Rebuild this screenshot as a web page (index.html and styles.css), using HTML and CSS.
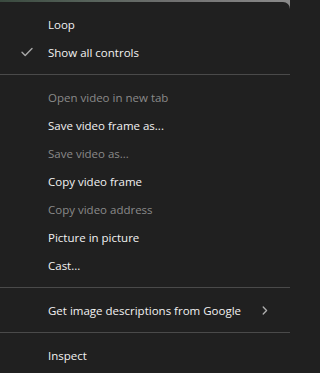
FILE: index.html
```html
<!DOCTYPE html>
<html>
<head>
<meta charset="utf-8">
<link rel="stylesheet" href="styles.css">
</head>
<body>
<div class="menu">
  <div class="item"><span class="label">Loop</span></div>
  <div class="item"><span class="check"><svg width="12" height="10" viewBox="0 0 12 10"><path d="M1 5.2 L4.2 8.4 L11 1.4" fill="none" stroke="#a8a8a8" stroke-width="1.4" stroke-linecap="round" stroke-linejoin="round"/></svg></span><span class="label">Show all controls</span></div>
  <div class="sep"></div>
  <div class="item disabled"><span class="label">Open video in new tab</span></div>
  <div class="item"><span class="label">Save video frame as...</span></div>
  <div class="item disabled"><span class="label">Save video as...</span></div>
  <div class="item"><span class="label">Copy video frame</span></div>
  <div class="item disabled"><span class="label">Copy video address</span></div>
  <div class="item"><span class="label">Picture in picture</span></div>
  <div class="item"><span class="label">Cast...</span></div>
  <div class="sep"></div>
  <div class="item"><span class="label">Get image descriptions from Google</span><span class="arrow"><svg width="6" height="9" viewBox="0 0 6 9"><path d="M1.2 1 L4.6 4.5 L1.2 8" fill="none" stroke="#b0b0b0" stroke-width="1.3" stroke-linecap="round" stroke-linejoin="round"/></svg></span></div>
  <div class="sep"></div>
  <div class="item"><span class="label">Inspect</span></div>
</div>
</body>
</html>
```

FILE: styles.css
```css
html {
  background: #202020;
}
html, body {
  margin: 0;
  padding: 0;
}
body {
  width: 290px;
  height: 373px;
  overflow: hidden;
  background: linear-gradient(90deg, #3a4a3f 0%, #56625a 30%, #707070 60%, #8a8a8a 100%);
  padding-top: 2px;
  box-sizing: border-box;
  font-family: "Open Sans", "Noto Sans", sans-serif;
  font-size: 11.5px;
}
.menu {
  background: #202020;
  border-top-right-radius: 7px;
  padding-top: 8px;
  height: 380px;
  box-sizing: border-box;
}
.item {
  height: 28px;
  display: flex;
  align-items: center;
  position: relative;
  color: #f2f2f2;
  padding-left: 48px;
  padding-right: 22px;
}
.item.disabled {
  color: #8a8a8a;
}
.label {
  flex: 1;
  white-space: nowrap;
}
.check {
  position: absolute;
  left: 21px;
  top: 9px;
  width: 12px;
  height: 10px;
  display: flex;
}
.arrow {
  width: 6px;
  height: 9px;
  display: flex;
}
.sep {
  height: 1px;
  background: #4a4a4a;
  margin: 8px 0;
}
```
